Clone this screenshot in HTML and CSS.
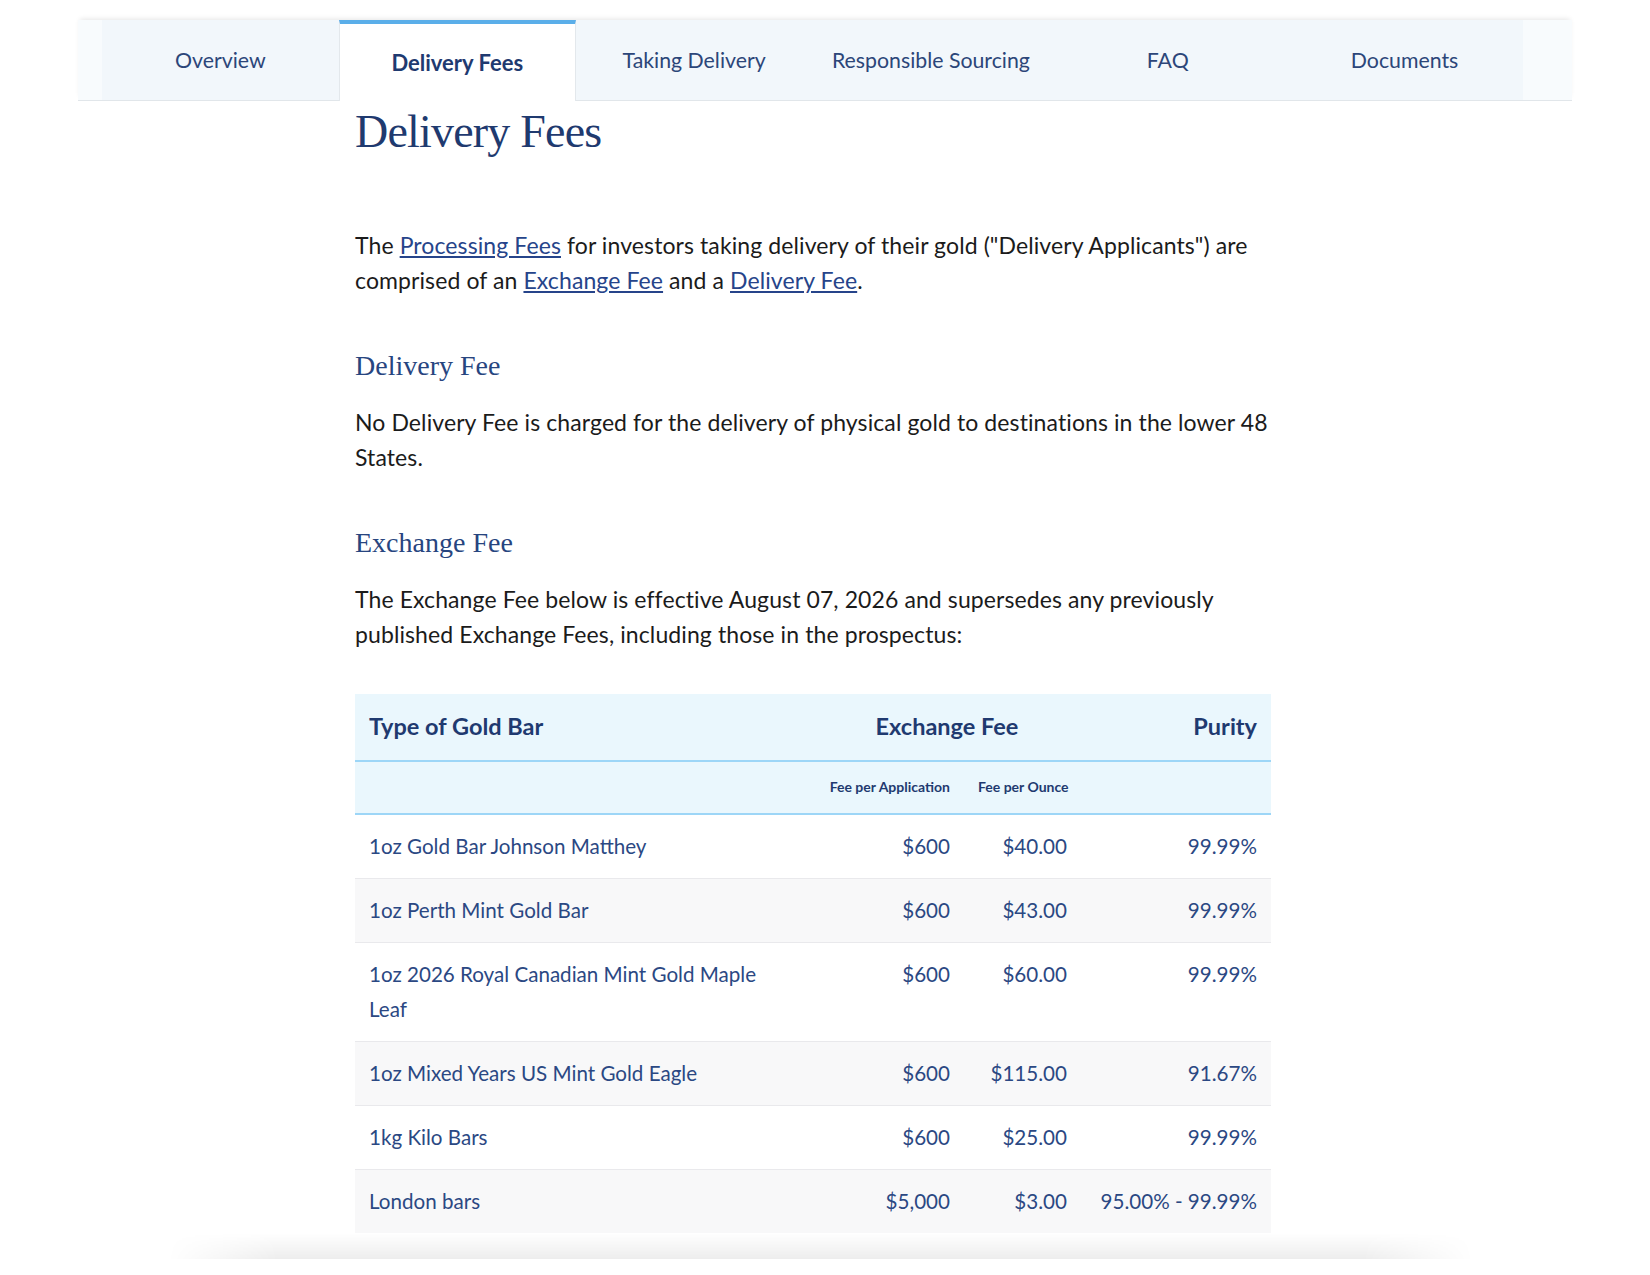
FILE: index.html
```html
<!DOCTYPE html>
<html lang="en">
<head>
    <meta charset="UTF-8">
    <meta name="viewport" content="width=device-width, initial-scale=1.0">
    <title>Delivery Fees</title>
    <link rel="stylesheet" href="styles.css">
</head>
<body>
    <div class="page">
        <nav class="tabs">
            <div class="tabs-list">
                <a class="tab" href="#">Overview</a>
                <a class="tab active" href="#">Delivery Fees</a>
                <a class="tab" href="#">Taking Delivery</a>
                <a class="tab" href="#">Responsible Sourcing</a>
                <a class="tab" href="#">FAQ</a>
                <a class="tab" href="#">Documents</a>
            </div>
        </nav>

        <main class="content">
            <h1>Delivery Fees</h1>

            <p class="lead">The <a href="#">Processing Fees</a> for investors taking delivery of their gold ("Delivery Applicants") are comprised of an <a href="#">Exchange Fee</a> and a <a href="#">Delivery Fee</a>.</p>

            <h3>Delivery Fee</h3>
            <p>No Delivery Fee is charged for the delivery of physical gold to destinations in the lower 48 States.</p>

            <h3>Exchange Fee</h3>
            <p>The Exchange Fee below is effective August 07, 2026 and supersedes any previously published Exchange Fees, including those in the prospectus:</p>

            <table class="fees">
                <colgroup>
                    <col class="col-name">
                    <col class="col-app">
                    <col class="col-oz">
                    <col class="col-purity">
                </colgroup>
                <thead>
                    <tr class="head-main">
                        <th class="left">Type of Gold Bar</th>
                        <th colspan="2" class="center fee-group">Exchange Fee</th>
                        <th class="right">Purity</th>
                    </tr>
                    <tr class="head-sub">
                        <th></th>
                        <th class="right">Fee per Application</th>
                        <th class="right">Fee per Ounce</th>
                        <th></th>
                    </tr>
                </thead>
                <tbody>
                    <tr>
                        <td>1oz Gold Bar Johnson Matthey</td>
                        <td class="right">$600</td>
                        <td class="right">$40.00</td>
                        <td class="right">99.99%</td>
                    </tr>
                    <tr>
                        <td>1oz Perth Mint Gold Bar</td>
                        <td class="right">$600</td>
                        <td class="right">$43.00</td>
                        <td class="right">99.99%</td>
                    </tr>
                    <tr>
                        <td>1oz 2026 Royal Canadian Mint Gold Maple Leaf</td>
                        <td class="right">$600</td>
                        <td class="right">$60.00</td>
                        <td class="right">99.99%</td>
                    </tr>
                    <tr>
                        <td>1oz Mixed Years US Mint Gold Eagle</td>
                        <td class="right">$600</td>
                        <td class="right">$115.00</td>
                        <td class="right">91.67%</td>
                    </tr>
                    <tr>
                        <td>1kg Kilo Bars</td>
                        <td class="right">$600</td>
                        <td class="right">$25.00</td>
                        <td class="right">99.99%</td>
                    </tr>
                    <tr>
                        <td>London bars</td>
                        <td class="right">$5,000</td>
                        <td class="right">$3.00</td>
                        <td class="right">95.00% - 99.99%</td>
                    </tr>
                </tbody>
            </table>
        </main>

        <div class="fold"></div>
        <footer class="page-footer"></footer>
    </div>
</body>
</html>
```

FILE: styles.css
```css
body {
    margin: 0;
    background: #fff;
    font-family: Lato, "Noto Sans", sans-serif;
    color: #1b1b1b;
}
.page {
    width: 1494px;
    margin: 20px auto 0;
}

/* tab strip */
.tabs {
    background: #f8fbfd;
    padding: 0 49px 0 24px;
    border-bottom: 1px solid #e1e6ea;
    box-shadow: 0 -3px 5px -2px rgba(0, 0, 0, 0.1);
}
.tabs-list {
    display: grid;
    grid-template-columns: repeat(6, 1fr);
    background: #f2f7fb;
}
.tab {
    display: flex;
    align-items: center;
    justify-content: center;
    height: 80px;
    font-size: 21.3px;
    color: #2c4679;
    text-decoration: none;
    box-sizing: border-box;
}
.tab.active {
    background: #fff;
    border-top: 4px solid #5aaee9;
    border-left: 1px solid #e3e8ec;
    border-right: 1px solid #e3e8ec;
    height: 81px;
    margin-bottom: -1px;
    font-size: 22px;
    font-weight: 700;
    color: #1f3a70;
}

/* page body */
.content {
    width: 916px;
    margin-left: 277px;
}
h1 {
    font-family: "Liberation Serif", serif;
    font-weight: 400;
    font-size: 46px;
    letter-spacing: -0.8px;
    line-height: 56px;
    color: #1f3a6f;
    margin: 3px 0 0;
}
h3 {
    font-family: "Liberation Serif", serif;
    font-weight: 400;
    font-size: 28px;
    line-height: 36px;
    color: #27457f;
    margin: 50px 0 0;
}
p {
    font-size: 23px;
    letter-spacing: 0.1px;
    line-height: 35px;
    margin: 21px 0 0;
}
p.lead {
    margin-top: 68px;
}
p a {
    color: #26448a;
}

/* fee table */
.fees {
    width: 916px;
    table-layout: fixed;
    border-collapse: collapse;
    margin-top: 42px;
    color: #2b4883;
}
.col-name { width: 440px; }
.col-app { width: 169px; }
.col-oz { width: 117px; }
.col-purity { width: 190px; }
.fees th {
    background: #eaf7fd;
    color: #1f3a70;
    font-weight: 700;
    white-space: nowrap;
    border-bottom: 2px solid #9dd6f7;
}
.head-main th {
    font-size: 23.5px;
    line-height: 35px;
    padding: 15px 14px 16px;
}
.head-main th.fee-group {
    padding-left: 32px;
}
.head-sub th {
    font-size: 14px;
    line-height: 20px;
    padding: 15px 14px 16px;
}
.fees td {
    font-size: 20.6px;
    line-height: 35px;
    padding: 14px;
    vertical-align: top;
    border-bottom: 1px solid #e9e9ec;
}
.fees tbody tr:nth-child(even) td {
    background: #f8f8f9;
}
.fees tbody tr:last-child td {
    border-bottom: none;
}
.left { text-align: left; }
.center { text-align: center; }
.right { text-align: right; }

.fold {
    height: 26px;
    margin: 0 99px 0 90px;
    background: linear-gradient(to bottom, rgba(0, 0, 0, 0), rgba(0, 0, 0, 0.07));
    -webkit-mask-image: linear-gradient(to right, transparent 0, #000 110px, #000 calc(100% - 110px), transparent 100%);
    mask-image: linear-gradient(to right, transparent 0, #000 110px, #000 calc(100% - 110px), transparent 100%);
}
.page-footer {
    height: 40px;
    background: #fff;
}
```
